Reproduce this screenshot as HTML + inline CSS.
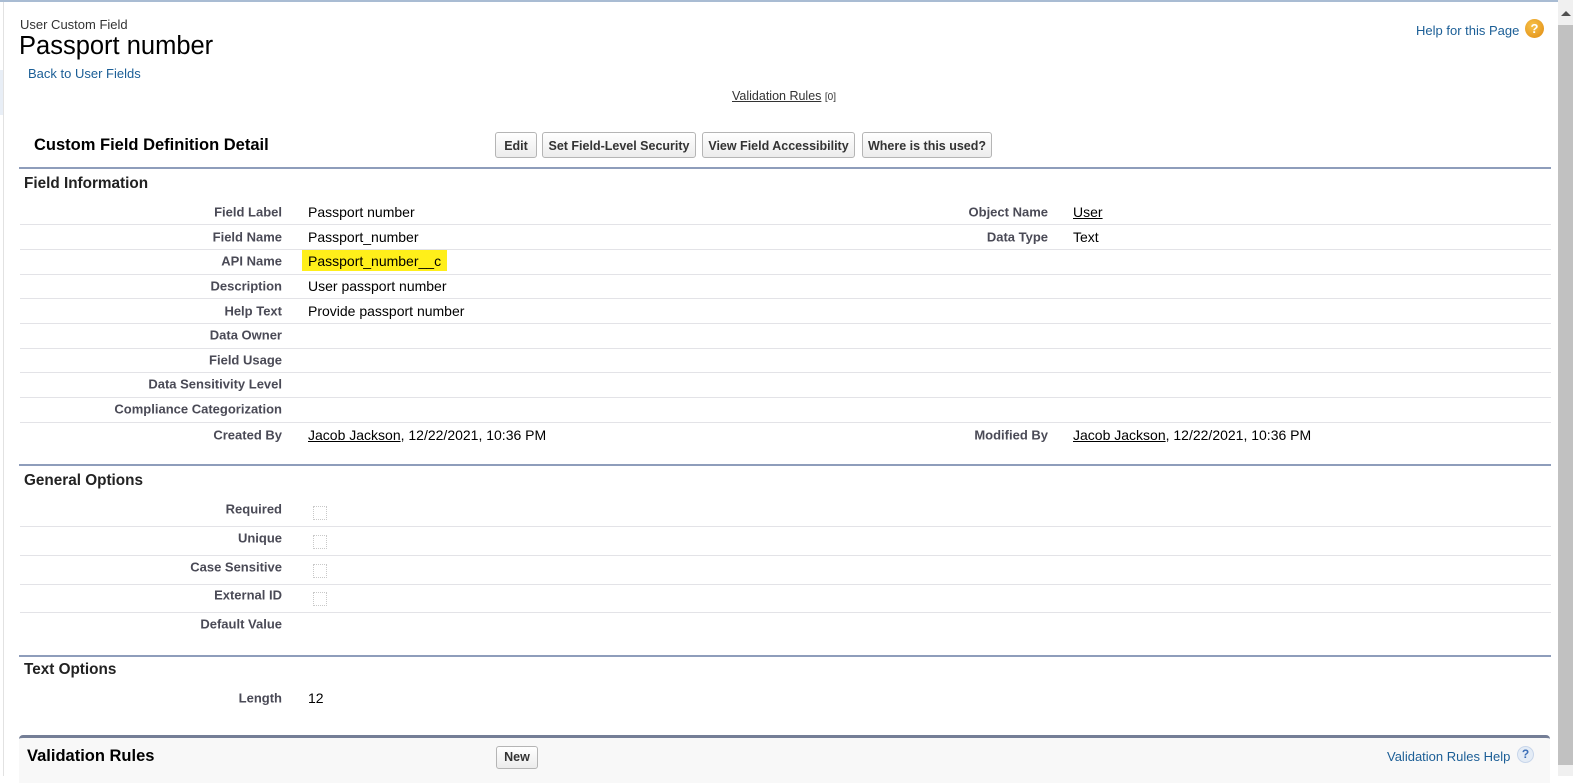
<!DOCTYPE html>
<html><head><meta charset="utf-8"><style>
body{margin:0;width:1573px;height:776px;overflow:hidden;background:#fff;font-family:"Liberation Sans",Arial,sans-serif;position:relative;color:#000}
.a{position:absolute;white-space:nowrap}
.lbl{position:absolute;right:1291px;font-size:13px;font-weight:bold;color:#4a4a56;white-space:nowrap;transform:translateY(-50%)}
.lbl2{position:absolute;right:525px;font-size:13px;font-weight:bold;color:#4a4a56;white-space:nowrap;transform:translateY(-50%)}
.val{position:absolute;left:308px;font-size:14px;color:#000;white-space:nowrap;transform:translateY(-50%)}
.val2{position:absolute;left:1073px;font-size:14px;white-space:nowrap;transform:translateY(-50%)}
.sep{position:absolute;left:20px;width:1531px;height:1px;background:#e3e3e7}
.hl{position:absolute;left:19px;width:1532px;height:2px;background:#8e9dbb}
.btn{position:absolute;top:132px;height:26px;line-height:26px;box-sizing:border-box;border:1px solid #b5b5b5;border-radius:3px;background:linear-gradient(#fff,#ececec);font-size:12.5px;font-weight:bold;color:#333;text-align:center}
.cb{position:absolute;left:313px;width:12px;height:12px;border:1px dotted #c9c9c9}
.h{position:absolute;font-size:15.3px;font-weight:bold;color:#222;left:24px;transform:translateY(-50%)}
u{text-decoration:underline}
</style></head><body>
<div class="a" style="left:0;top:0;width:1558px;height:2px;background:#a9bcd3"></div>
<div class="a" style="left:3px;top:2px;width:1px;height:774px;background:#e2e2e2"></div>
<div class="a" style="left:0;top:70px;width:3px;height:45px;background:#e8eef6"></div>
<div class="a" style="left:1558px;top:0;width:15px;height:776px;background:#f0f0f0"></div>
<div class="a" style="left:1558px;top:25px;width:15px;height:740px;background:#c1c1c1"></div>
<div class="a" style="left:1561px;top:11px;width:0;height:0;border-left:5px solid transparent;border-right:5px solid transparent;border-bottom:5px solid #505050"></div>

<div class="a" style="left:20px;top:17px;font-size:13px;color:#333">User Custom Field</div>
<div class="a" style="left:19px;top:32px;font-size:25.5px;color:#000">Passport number</div>
<div class="a" style="left:28px;top:66px;font-size:13px;color:#1b5e96">Back to User Fields</div>
<div class="a" style="left:1416px;top:23px;font-size:13px;color:#1b5e96">Help for this Page</div>
<div class="a" style="left:1525px;top:19px;width:19px;height:19px;border-radius:50%;background:radial-gradient(circle at 40% 35%,#f7c24a,#e08a10);color:#fff;font-size:13px;font-weight:bold;text-align:center;line-height:19px">?</div>
<div class="a" style="left:732px;top:89px;font-size:12.5px;color:#333"><u>Validation Rules</u> <span style="font-size:10px">[0]</span></div>

<div class="a" style="left:34px;top:136px;font-size:16.5px;font-weight:bold;color:#000">Custom Field Definition Detail</div>
<div class="btn" style="left:495px;width:42px">Edit</div>
<div class="btn" style="left:542px;width:154px">Set Field-Level Security</div>
<div class="btn" style="left:702px;width:153px">View Field Accessibility</div>
<div class="btn" style="left:862px;width:130px">Where is this used?</div>
<div class="hl" style="top:167px"></div>
<div class="h" style="top:184px">Field Information</div>

<div class="a" style="left:302px;top:250px;width:145px;height:21px;background:#ffef1a"></div>

<div class="lbl" style="top:212px">Field Label</div><div class="val" style="top:212px">Passport number</div>
<div class="lbl2" style="top:212px">Object Name</div><div class="val2" style="top:212px"><u>User</u></div>
<div class="sep" style="top:224px"></div>
<div class="lbl" style="top:237px">Field Name</div><div class="val" style="top:237px">Passport_number</div>
<div class="lbl2" style="top:237px">Data Type</div><div class="val2" style="top:237px">Text</div>
<div class="sep" style="top:249px"></div>
<div class="lbl" style="top:261px">API Name</div><div class="val" style="top:261px">Passport_number__c</div>
<div class="sep" style="top:274px"></div>
<div class="lbl" style="top:286px">Description</div><div class="val" style="top:286px">User passport number</div>
<div class="sep" style="top:298px"></div>
<div class="lbl" style="top:311px">Help Text</div><div class="val" style="top:311px">Provide passport number</div>
<div class="sep" style="top:323px"></div>
<div class="lbl" style="top:335px">Data Owner</div>
<div class="sep" style="top:348px"></div>
<div class="lbl" style="top:360px">Field Usage</div>
<div class="sep" style="top:372px"></div>
<div class="lbl" style="top:384px">Data Sensitivity Level</div>
<div class="sep" style="top:397px"></div>
<div class="lbl" style="top:409px">Compliance Categorization</div>
<div class="sep" style="top:422px"></div>
<div class="lbl" style="top:435px">Created By</div><div class="val" style="top:435px"><u>Jacob Jackson</u>, 12/22/2021, 10:36 PM</div>
<div class="lbl2" style="top:435px">Modified By</div><div class="val2" style="top:435px"><u>Jacob Jackson</u>, 12/22/2021, 10:36 PM</div>

<div class="hl" style="top:464px"></div>
<div class="h" style="top:481px">General Options</div>
<div class="lbl" style="top:509px">Required</div><div class="cb" style="top:506px"></div>
<div class="sep" style="top:526px"></div>
<div class="lbl" style="top:538px">Unique</div><div class="cb" style="top:535px"></div>
<div class="sep" style="top:555px"></div>
<div class="lbl" style="top:567px">Case Sensitive</div><div class="cb" style="top:564px"></div>
<div class="sep" style="top:584px"></div>
<div class="lbl" style="top:595px">External ID</div><div class="cb" style="top:592px"></div>
<div class="sep" style="top:612px"></div>
<div class="lbl" style="top:624px">Default Value</div>

<div class="hl" style="top:655px"></div>
<div class="h" style="top:670px">Text Options</div>
<div class="lbl" style="top:698px">Length</div><div class="val" style="top:698px">12</div>

<div class="a" style="left:19px;top:735px;width:1531px;height:45px;background:#f8f8f8;border-top:3px solid #747e96;border-radius:4px 4px 0 0"></div>
<div class="a" style="left:27px;top:747px;font-size:16.5px;font-weight:bold;color:#000">Validation Rules</div>
<div class="btn" style="left:496px;top:746px;width:42px;height:23px;line-height:21px">New</div>
<div class="a" style="left:1387px;top:749px;font-size:13px;color:#1b5e96">Validation Rules Help</div>
<div class="a" style="left:1517px;top:746px;width:17px;height:17px;border-radius:50%;background:#e4ecf6;border:1px solid #c8d6ea;box-sizing:border-box;color:#3d70b8;font-size:12px;font-weight:bold;text-align:center;line-height:15px">?</div>
</body></html>
